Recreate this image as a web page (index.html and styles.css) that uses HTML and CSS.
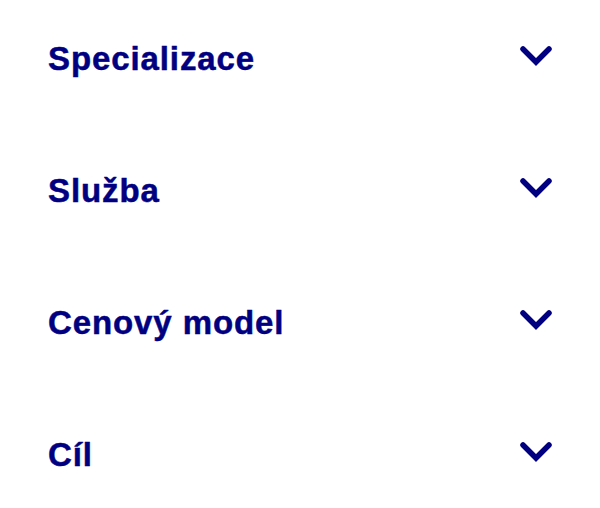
FILE: index.html
```html
<!DOCTYPE html>
<html lang="cs">
<head>
<meta charset="utf-8">
<link rel="stylesheet" href="styles.css">
</head>
<body>
<div class="list">
  <div class="item"><span class="label">Specializace</span><svg class="chev" viewBox="0 0 34 22"><path d="M4 4 L17 17 L30 4"/></svg></div>
  <div class="item"><span class="label">Služba</span><svg class="chev" viewBox="0 0 34 22"><path d="M4 4 L17 17 L30 4"/></svg></div>
  <div class="item"><span class="label">Cenový model</span><svg class="chev" viewBox="0 0 34 22"><path d="M4 4 L17 17 L30 4"/></svg></div>
  <div class="item"><span class="label">Cíl</span><svg class="chev" viewBox="0 0 34 22"><path d="M4 4 L17 17 L30 4"/></svg></div>
</div>
</body>
</html>
```
FILE: styles.css
```css
html, body { margin: 0; padding: 0; background: #fff; }
.list { display: flex; flex-direction: column; padding: 0 48px; }
.item { height: 132px; display: flex; justify-content: space-between; align-items: flex-start; padding-top: 39px; box-sizing: border-box; }
.label { font-family: "Liberation Sans", Arial, sans-serif; font-weight: 700; font-size: 33px; letter-spacing: 0.9px; line-height: 40px; color: #000080; -webkit-text-stroke: 0.5px #000080; }
.chev { width: 34px; height: 22px; margin-top: 6px; margin-right: -1px; }
.chev path { fill: none; stroke: #000080; stroke-width: 5.5; stroke-linecap: round; stroke-linejoin: miter; }
```
